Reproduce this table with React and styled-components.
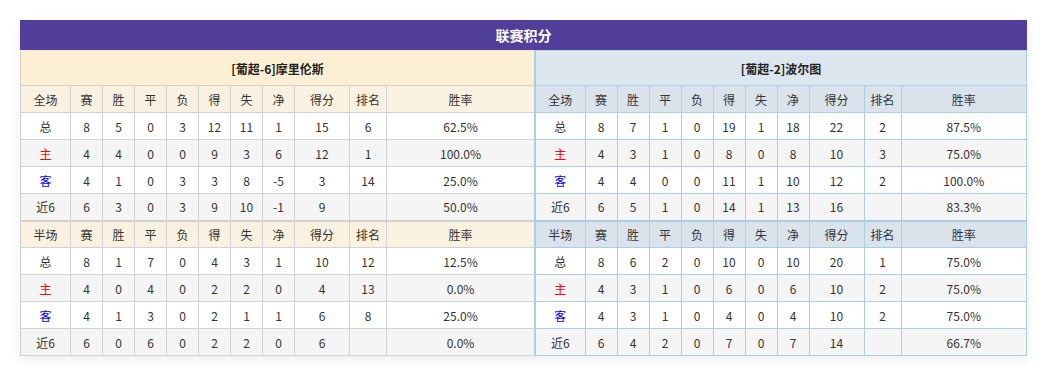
import React from 'react'
import styled, { createGlobalStyle } from 'styled-components'

const GlobalStyle = createGlobalStyle`
  body {
    margin: 0;
    background: #fff;
    font-family: "Noto Sans CJK SC", "Noto Sans", sans-serif;
    color: #333;
  }
`

const Page = styled.div`
  padding: 20px;
`

const Panel = styled.div`
  width: 1007px;
  box-shadow: 0 3px 10px rgba(0, 0, 0, 0.08);
`

const Title = styled.div`
  height: 30px;
  line-height: 30px;
  background: #523f9c;
  color: #fff;
  font-size: 14px;
  font-weight: bold;
  text-align: center;
`

const Tables = styled.div`
  display: flex;
`

const themes = {
  home: { line: '#d2d2d2', team: '#fcefd3', head: '#faf1e0', width: '514px' },
  away: { line: '#a9d0e2', team: '#dce6ef', head: '#dae3ec', width: '493px' },
}

const Table = styled.table`
  width: ${p => themes[p.$side].width};
  table-layout: fixed;
  border-collapse: collapse;
  font-size: 12px;
  text-align: center;
  ${p => p.$side === 'away' && `border-left: 2px solid ${themes.away.line};`}

  td, th {
    border: 1px solid ${p => themes[p.$side].line};
    padding: 0;
    font-weight: normal;
  }
  ${p => p.$side === 'home' && `tr > *:last-child { border-right: none; }`}
`

const TeamRow = styled.tr`
  height: 35px;
  background: ${p => themes[p.$side].team};

  th {
    font-weight: bold;
    color: #222;
    border-top: 1px solid ${p => (p.$side === 'away' ? '#bcd8e8' : '#f3e6cc')};
  }
`

const HeadRow = styled.tr`
  height: 27px;
  background: ${p => themes[p.$side].head};
  ${p => p.$split && `th { border-top: 2px solid ${themes[p.$side].line}; }`}
`

const DataRow = styled.tr`
  height: 27px;
  background: ${p => (p.$alt ? '#f5f5f5' : '#fff')};
`

const Label = styled.td`
  color: ${p => (p.$kind === '主' ? '#ff0000' : p.$kind === '客' ? '#0000ff' : '#333')};
`

const heads = ['赛', '胜', '平', '负', '得', '失', '净', '得分', '排名', '胜率']

const data = {
  home: {
    name: '[葡超-6]摩里伦斯',
    full: [
      ['总', 8, 5, 0, 3, 12, 11, 1, 15, 6, '62.5%'],
      ['主', 4, 4, 0, 0, 9, 3, 6, 12, 1, '100.0%'],
      ['客', 4, 1, 0, 3, 3, 8, -5, 3, 14, '25.0%'],
      ['近6', 6, 3, 0, 3, 9, 10, -1, 9, '', '50.0%'],
    ],
    half: [
      ['总', 8, 1, 7, 0, 4, 3, 1, 10, 12, '12.5%'],
      ['主', 4, 0, 4, 0, 2, 2, 0, 4, 13, '0.0%'],
      ['客', 4, 1, 3, 0, 2, 1, 1, 6, 8, '25.0%'],
      ['近6', 6, 0, 6, 0, 2, 2, 0, 6, '', '0.0%'],
    ],
  },
  away: {
    name: '[葡超-2]波尔图',
    full: [
      ['总', 8, 7, 1, 0, 19, 1, 18, 22, 2, '87.5%'],
      ['主', 4, 3, 1, 0, 8, 0, 8, 10, 3, '75.0%'],
      ['客', 4, 4, 0, 0, 11, 1, 10, 12, 2, '100.0%'],
      ['近6', 6, 5, 1, 0, 14, 1, 13, 16, '', '83.3%'],
    ],
    half: [
      ['总', 8, 6, 2, 0, 10, 0, 10, 20, 1, '75.0%'],
      ['主', 4, 3, 1, 0, 6, 0, 6, 10, 2, '75.0%'],
      ['客', 4, 3, 1, 0, 4, 0, 4, 10, 2, '75.0%'],
      ['近6', 6, 4, 2, 0, 7, 0, 7, 14, '', '66.7%'],
    ],
  },
}

const Section = ({ side, label, rows, split }) => (
  <>
    <HeadRow $side={side} $split={split}>
      <th>{label}</th>
      {heads.map(h => <th key={h}>{h}</th>)}
    </HeadRow>
    {rows.map(([kind, ...vals], i) => (
      <DataRow key={kind} $alt={i % 2 === 1}>
        <Label $kind={kind}>{kind}</Label>
        {vals.map((v, j) => <td key={j}>{v}</td>)}
      </DataRow>
    ))}
  </>
)

const TeamTable = ({ side }) => {
  const team = data[side]
  return (
    <Table $side={side}>
      <colgroup>
        <col style={{ width: 50 }} />
        {[0, 1, 2, 3, 4, 5, 6].map(i => <col key={i} style={{ width: 32 }} />)}
        <col style={{ width: 55 }} />
        <col style={{ width: 37 }} />
        <col />
      </colgroup>
      <tbody>
        <TeamRow $side={side}>
          <th colSpan={11}>{team.name}</th>
        </TeamRow>
        <Section side={side} label="全场" rows={team.full} />
        <Section side={side} label="半场" rows={team.half} split />
      </tbody>
    </Table>
  )
}

export default function App() {
  return (
    <Page>
      <GlobalStyle />
      <Panel>
        <Title>联赛积分</Title>
        <Tables>
          <TeamTable side="home" />
          <TeamTable side="away" />
        </Tables>
      </Panel>
    </Page>
  )
}
